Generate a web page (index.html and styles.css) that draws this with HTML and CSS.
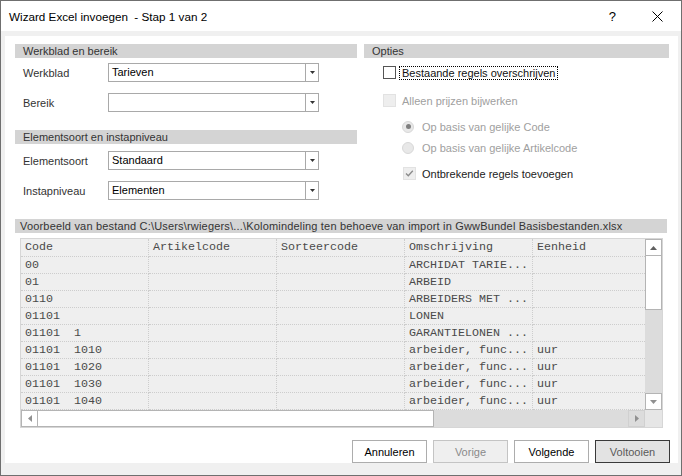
FILE: index.html
```html
<!DOCTYPE html>
<html>
<head>
<meta charset="utf-8">
<title>Wizard Excel invoegen</title>
<link rel="stylesheet" href="styles.css">
</head>
<body>
<div class="window">
  <div class="titlebar">
    <span class="title">Wizard Excel invoegen  - Stap 1 van 2</span>
    <span class="help">?</span>
    <svg class="close" width="11" height="11" viewBox="0 0 11 11"><path d="M0.5 0.5 L10.5 10.5 M10.5 0.5 L0.5 10.5" stroke="#000" stroke-width="1" fill="none"/></svg>
  </div>
  <div class="frame">
    <div class="panel">
      <div class="top">
        <div class="left">
          <div class="bar">Werkblad en bereik</div>
          <div class="field f1"><span class="lbl">Werkblad</span><div class="combo"><span class="val">Tarieven</span><span class="drop"><svg width="5" height="3" viewBox="0 0 5 3"><path d="M0 0H5L2.5 3Z" fill="#333"/></svg></span></div></div>
          <div class="field f2"><span class="lbl">Bereik</span><div class="combo"><span class="val"></span><span class="drop"><svg width="5" height="3" viewBox="0 0 5 3"><path d="M0 0H5L2.5 3Z" fill="#333"/></svg></span></div></div>
          <div class="bar bar2">Elementsoort en instapniveau</div>
          <div class="field f3"><span class="lbl">Elementsoort</span><div class="combo"><span class="val">Standaard</span><span class="drop"><svg width="5" height="3" viewBox="0 0 5 3"><path d="M0 0H5L2.5 3Z" fill="#333"/></svg></span></div></div>
          <div class="field f4"><span class="lbl">Instapniveau</span><div class="combo"><span class="val">Elementen</span><span class="drop"><svg width="5" height="3" viewBox="0 0 5 3"><path d="M0 0H5L2.5 3Z" fill="#333"/></svg></span></div></div>
        </div>
        <div class="right">
          <div class="bar">Opties</div>
          <div class="opt o1"><span class="cb"></span><span class="focus">Bestaande regels overschrijven</span></div>
          <div class="opt o2"><span class="cb dis"></span><span class="txt dtxt">Alleen prijzen bijwerken</span></div>
          <div class="opt o3"><span class="radio on"></span><span class="txt rtxt">Op basis van gelijke Code</span></div>
          <div class="opt o4"><span class="radio"></span><span class="txt rtxt">Op basis van gelijke Artikelcode</span></div>
          <div class="opt o5"><span class="cb dis"><svg width="11" height="11" viewBox="0 0 11 11"><path d="M2 5.5L4.3 7.8L8.8 2.8" stroke="#8a8a8a" stroke-width="1.3" fill="none"/></svg></span><span class="txt ctxt">Ontbrekende regels toevoegen</span></div>
        </div>
      </div>
      <div class="bar pbar">Voorbeeld van bestand C:\Users\rwiegers\...\Kolomindeling ten behoeve van import in GwwBundel Basisbestanden.xlsx</div>
      <div class="grid">
        <div class="gmain">
          <div class="cols">
            <div class="row head"><span class="c">Code</span><span class="c">Artikelcode</span><span class="c">Sorteercode</span><span class="c">Omschrijving</span><span class="c">Eenheid</span><span class="c"></span></div>
            <div class="row"><span class="c">00</span><span class="c"></span><span class="c"></span><span class="c">ARCHIDAT TARIE...</span><span class="c"></span><span class="c"></span></div>
            <div class="row"><span class="c">01</span><span class="c"></span><span class="c"></span><span class="c">ARBEID</span><span class="c"></span><span class="c"></span></div>
            <div class="row"><span class="c">0110</span><span class="c"></span><span class="c"></span><span class="c">ARBEIDERS MET ...</span><span class="c"></span><span class="c"></span></div>
            <div class="row"><span class="c">01101</span><span class="c"></span><span class="c"></span><span class="c">LONEN</span><span class="c"></span><span class="c"></span></div>
            <div class="row"><span class="c">01101  1</span><span class="c"></span><span class="c"></span><span class="c">GARANTIELONEN ...</span><span class="c"></span><span class="c"></span></div>
            <div class="row"><span class="c">01101  1010</span><span class="c"></span><span class="c"></span><span class="c">arbeider, func...</span><span class="c">uur</span><span class="c"></span></div>
            <div class="row"><span class="c">01101  1020</span><span class="c"></span><span class="c"></span><span class="c">arbeider, func...</span><span class="c">uur</span><span class="c"></span></div>
            <div class="row"><span class="c">01101  1030</span><span class="c"></span><span class="c"></span><span class="c">arbeider, func...</span><span class="c">uur</span><span class="c"></span></div>
            <div class="row"><span class="c">01101  1040</span><span class="c"></span><span class="c"></span><span class="c">arbeider, func...</span><span class="c">uur</span><span class="c"></span></div>
          </div>
          <div class="vs">
            <span class="sbtn"><svg width="7" height="4" viewBox="0 0 7 4"><path d="M0 4L3.5 0L7 4Z" fill="#606060"/></svg></span>
            <span class="vthumb"></span>
            <span class="vtrack"></span>
            <span class="sbtn"><svg width="7" height="4" viewBox="0 0 7 4"><path d="M0 0L3.5 4L7 0Z" fill="#909090"/></svg></span>
          </div>
        </div>
        <div class="hs">
          <span class="sbtn"><svg width="4" height="7" viewBox="0 0 4 7"><path d="M4 0L0 3.5L4 7Z" fill="#909090"/></svg></span>
          <span class="hthumb"></span>
          <span class="htrack"></span>
          <span class="sbtn rbtn"><svg width="4" height="7" viewBox="0 0 4 7"><path d="M0 0L4 3.5L0 7Z" fill="#909090"/></svg></span>
          <span class="corner"></span>
        </div>
      </div>
      <div class="buttons">
        <span class="btn">Annuleren</span>
        <span class="btn dis">Vorige</span>
        <span class="btn">Volgende</span>
        <span class="btn def">Voltooien</span>
      </div>
    </div>
  </div>
</div>
</body>
</html>
```

FILE: styles.css
```css
* { box-sizing: border-box; margin: 0; padding: 0; }
html, body { width: 682px; height: 476px; overflow: hidden; background: #fff; }
body { font-family: "Liberation Sans", Arial, sans-serif; font-size: 11px; color: #000; }

.window { width: 682px; height: 476px; border: 1px solid #6f6f6f; background: #f0f0f0; display: flex; flex-direction: column; }

.titlebar { height: 30px; flex: none; background: #fff; display: flex; align-items: center; padding-left: 8px; }
.title { flex: 1; font-size: 11.7px; white-space: pre; color: #000; }
.help { font-size: 13px; margin-right: 36px; color: #000; }
.close { display: block; margin-right: 18px; }

.frame { flex: 1; padding: 5px 3px 12px 4px; }
.panel { height: 427px; background: #fff; padding: 8px 8px 0 10px; display: flex; flex-direction: column; }

.top { height: 175px; flex: none; display: flex; gap: 7px; }
.left { width: 342px; flex: none; }
.right { width: 305px; flex: none; }

.bar { height: 14px; line-height: 14px; background: #d4d4d4; color: #333; padding-left: 8px; white-space: nowrap; overflow: hidden; }
.bar2 { margin-top: 18px; }

.field { display: flex; align-items: center; height: 19px; padding-left: 8px; }
.f1 { margin-top: 5px; }
.f2 { margin-top: 11px; }
.f3 { margin-top: 7px; }
.f4 { margin-top: 11px; }
.lbl { width: 85px; color: #333; }
.combo { width: 211px; height: 19px; border: 1px solid #a9a9a9; display: flex; background: #fff; }
.val { flex: 1; padding-left: 3px; line-height: 17px; }
.drop { width: 13px; border-left: 1px solid #a9a9a9; display: flex; align-items: center; justify-content: center; }
.drop svg { display: block; }

.opt { display: flex; align-items: center; height: 17px; }
.o1 { margin-top: 6px; padding-left: 19px; }
.o2 { margin-top: 11px; padding-left: 19px; }
.o3 { margin-top: 9px; padding-left: 38px; }
.o4 { margin-top: 4px; padding-left: 38px; }
.o5 { margin-top: 9px; padding-left: 39px; }
.cb { width: 13px; height: 13px; flex: none; border: 1px solid #555; background: #fff; display: flex; align-items: center; justify-content: center; }
.cb.dis { background: #eeeeee; border-color: #e2e2e2; }
.cb svg { display: block; }
.focus { margin-left: 3px; border: 1px dotted #000; padding: 0 2px; height: 14px; line-height: 12px; color: #111; }
.txt { white-space: nowrap; }
.dtxt { margin-left: 6px; color: #a0a0a0; }
.rtxt { margin-left: 8px; color: #a0a0a0; }
.ctxt { margin-left: 6px; color: #222; }
.radio { width: 12px; height: 12px; flex: none; border-radius: 50%; background: #e8e8e8; border: 1px solid #d8d8d8; display: flex; align-items: center; justify-content: center; }
.radio.on::after { content: ""; width: 5px; height: 5px; border-radius: 50%; background: #7f7f7f; }

.pbar { width: 652px; padding-left: 5px; flex: none; letter-spacing: 0.18px; }

.grid { margin: 5px 0 0 5px; width: 643px; height: 190px; flex: none; border: 1px solid #d6d6d6; background: #efefef; display: flex; flex-direction: column; }
.gmain { display: flex; height: 171px; }
.cols { width: 624px; overflow: hidden; }
.row { display: flex; height: 17px; }
.row.head { height: 18px; }
.c { width: 128px; flex: none; border-right: 1px dotted #cdcdcd; border-bottom: 1px dotted #cdcdcd; padding-left: 4px; font-family: "Liberation Mono", "Courier New", monospace; font-size: 11.67px; line-height: 16px; white-space: pre; color: #4a4a4a; overflow: hidden; }
.head .c { line-height: 17px; }

.vs { width: 17px; display: flex; flex-direction: column; background: #dcdcdc; }
.sbtn { width: 17px; height: 17px; flex: none; background: #fff; border: 1px solid #b4b4b4; display: flex; align-items: center; justify-content: center; }
.sbtn svg { display: block; }
.vthumb { height: 54px; flex: none; background: #fff; border: 1px solid #b4b4b4; border-top: none; }
.vtrack { flex: 1; }
.hs { height: 17px; display: flex; background: #dcdcdc; }
.hthumb { width: 396px; flex: none; background: #fff; border: 1px solid #b4b4b4; border-left: none; }
.htrack { flex: 1; }
.rbtn { background: #dcdcdc; border-color: #d0d0d0; }
.corner { width: 17px; flex: none; background: #e6e6e6; }

.buttons { margin-top: 12px; display: flex; justify-content: flex-end; gap: 6px; }
.btn { width: 75px; height: 23px; border: 1px solid #adadad; background: #fff; display: flex; align-items: center; justify-content: center; color: #000; }
.btn.dis { background: #efefef; border-color: #c4c4c4; color: #8a8a8a; }
.btn.def { background: #e3e3e3; border-color: #3a3a3a; color: #5a5a5a; }
```
